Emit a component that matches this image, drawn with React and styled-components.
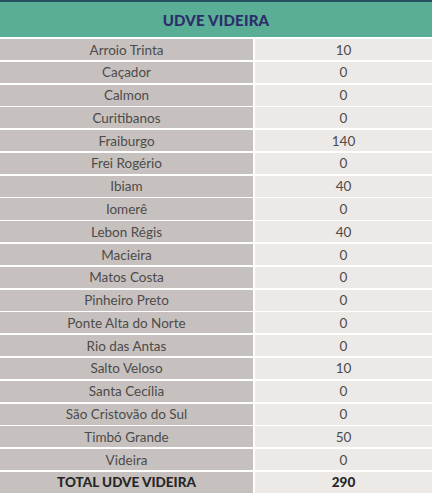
import React from "react";
import styled, { createGlobalStyle } from "styled-components";

const GlobalStyle = createGlobalStyle`
  body {
    margin: 0;
    background: #ffffff;
    font-family: "Lato", "Noto Sans", sans-serif;
  }
`;

const Table = styled.div`
  width: 432px;
  display: flex;
  flex-direction: column;
`;

const TopRule = styled.div`
  height: 2px;
  background: #24505f;
`;

const Header = styled.div`
  height: 35px;
  background: #5aae95;
  display: flex;
  align-items: center;
  justify-content: center;
  color: #2c2d6b;
  font-weight: 900;
  font-size: 15px;
  letter-spacing: 0.2px;
`;

const Body = styled.div`
  margin-top: 2px;
  display: grid;
  grid-template-columns: 253px 177px;
  column-gap: 2px;
  row-gap: 1.7px;
`;

const Cell = styled.div`
  height: 21.1px;
  display: flex;
  align-items: center;
  justify-content: center;
  background: ${(p) => (p.$side === "left" ? "#c6c1be" : "#ece9e7")};
  color: ${(p) => (p.$bold ? "#262626" : "#4d4b4b")};
  font-size: 13.5px;
  font-weight: ${(p) => (p.$bold ? 900 : 400)};
`;

const rows = [
  ["Arroio Trinta", 10],
  ["Caçador", 0],
  ["Calmon", 0],
  ["Curitibanos", 0],
  ["Fraiburgo", 140],
  ["Frei Rogério", 0],
  ["Ibiam", 40],
  ["Iomerê", 0],
  ["Lebon Régis", 40],
  ["Macieira", 0],
  ["Matos Costa", 0],
  ["Pinheiro Preto", 0],
  ["Ponte Alta do Norte", 0],
  ["Rio das Antas", 0],
  ["Salto Veloso", 10],
  ["Santa Cecília", 0],
  ["São Cristovão do Sul", 0],
  ["Timbó Grande", 50],
  ["Videira", 0],
];

export default function App() {
  return (
    <>
      <GlobalStyle />
      <Table>
        <TopRule />
        <Header>UDVE VIDEIRA</Header>
        <Body>
          {rows.map(([name, value]) => (
            <React.Fragment key={name}>
              <Cell $side="left">{name}</Cell>
              <Cell $side="right">{value}</Cell>
            </React.Fragment>
          ))}
          <Cell $side="left" $bold>
            TOTAL UDVE VIDEIRA
          </Cell>
          <Cell $side="right" $bold>
            290
          </Cell>
        </Body>
      </Table>
    </>
  );
}
